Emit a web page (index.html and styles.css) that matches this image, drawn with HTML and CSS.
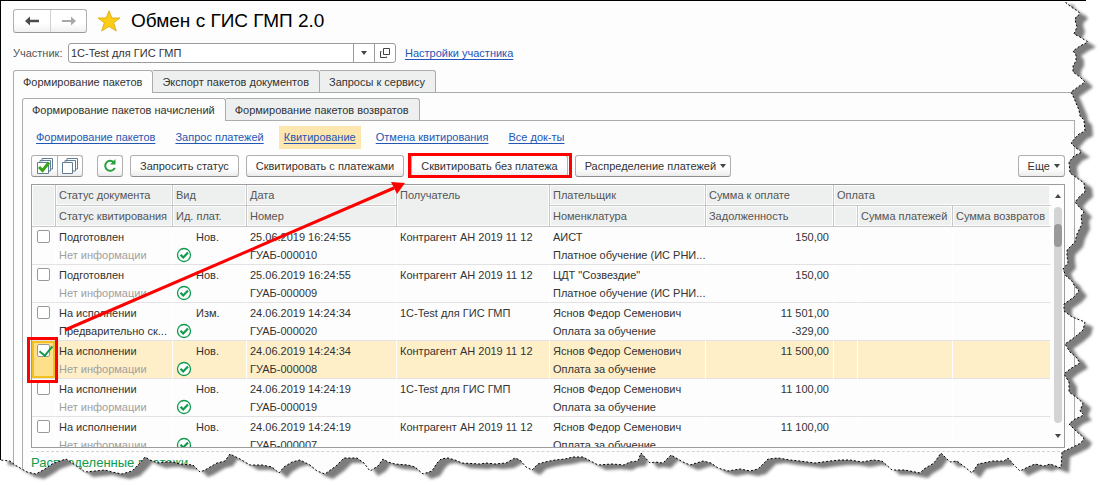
FILE: index.html
```
<!DOCTYPE html>
<html lang="ru">
<head>
<meta charset="utf-8">
<title>Обмен с ГИС ГМП 2.0</title>
<link rel="stylesheet" href="styles.css">
</head>
<body>
<svg class="defs" aria-hidden="true">
  <symbol id="ok" viewBox="0 0 16 16"><circle cx="8" cy="8" r="6.5" fill="#fff" stroke="#0d9b4c" stroke-width="1.3"/><path d="M4.5 7.8 7.2 10.5 12 5.6" fill="none" stroke="#0d9b4c" stroke-width="2.2"/></symbol>
</svg>
<main class="window">
  <header class="title-bar">
    <div class="history">
      <button type="button" aria-label="Назад"><svg width="16" height="12" viewBox="0 0 16 12"><path d="M1 6 6 1.5V4.8H15V7.2H6V10.5Z" fill="#4a4a4a"/></svg></button>
      <button type="button" aria-label="Вперед"><svg width="16" height="12" viewBox="0 0 16 12"><path d="M15 6 10 1.5V5H1V7H10V10.5Z" fill="#a8a8a8"/></svg></button>
    </div>
    <svg class="star" width="24" height="22" viewBox="0 0 24 22"><path d="M12 .8 14.8 8H23L16.6 12.8 19.3 21 12 16.4 4.7 21 7.4 12.8 1 8H9.2Z" fill="#fbcd17" stroke="#e0b01e"/></svg>
    <h1>Обмен с ГИС ГМП 2.0</h1>
  </header>

  <div class="member">
    <label for="member">Участник:</label>
    <div class="combo">
      <input id="member" type="text" value="1С-Test для ГИС ГМП">
      <button type="button" aria-label="Выбрать"><i class="caret"></i></button>
      <button type="button" aria-label="Открыть"><svg width="10" height="10" viewBox="0 0 10 10"><path d="M3.5.5H9.5V6.5H3.5ZM1.5 3.5H.5V9.5H6.5V8.5" fill="none" stroke="#444"/></svg></button>
    </div>
    <a href="#">Настройки участника</a>
  </div>

  <div class="tabs">
    <button type="button" class="tab active">Формирование пакетов</button>
    <button type="button" class="tab">Экспорт пакетов документов</button>
    <button type="button" class="tab">Запросы к сервису</button>
  </div>
  <section class="outer-panel">
    <div class="tabs">
      <button type="button" class="tab active">Формирование пакетов начислений</button>
      <button type="button" class="tab">Формирование пакетов возвратов</button>
    </div>
    <div class="inner-panel">
      <nav class="links">
        <a href="#">Формирование пакетов</a>
        <a href="#">Запрос платежей</a>
        <a href="#" class="current">Квитирование</a>
        <a href="#">Отмена квитирования</a>
        <a href="#">Все док-ты</a>
      </nav>
      <div class="toolbar">
        <div class="pair">
          <button type="button" aria-label="Отметить все"><svg width="16" height="16" viewBox="0 0 16 16"><path d="M5 3.5V.5H15.5V11H13M3 5.500V2.500H13.500V13H11" fill="none" stroke="#607d94"/><path d="M.5 4.500H11.500V15.500H.5Z" fill="#fff" stroke="#607d94"/><path d="M2 9 5.500 12.500 12 4.500" fill="none" stroke="#36a51c" stroke-width="3"/></svg></button>
          <button type="button" aria-label="Снять отметки"><svg width="16" height="16" viewBox="0 0 16 16"><path d="M5 3.500V.5H15.500V11H13M3 4.500V2.500H13.500V13H11" fill="none" stroke="#607d94"/><path d="M.5 4.500H10.500V15.500H.5Z" fill="#fff" stroke="#607d94"/></svg></button>
        </div>
        <button type="button" class="btn icon" aria-label="Обновить"><svg width="14" height="14" viewBox="0 0 14 14"><path d="M11.200 3.800A5 5 0 1 0 11.800 8.800" fill="none" stroke="#27a03c" stroke-width="2"/><path d="M12.500 0V5.500H7Z" fill="#27a03c"/></svg></button>
        <button type="button" class="btn">Запросить статус</button>
        <button type="button" class="btn">Сквитировать с платежами</button>
        <button type="button" class="btn">Сквитировать без платежа</button>
        <button type="button" class="btn menu">Распределение платежей<i class="caret"></i></button>
        <button type="button" class="btn menu more">Еще<i class="caret"></i></button>
      </div>

      <div class="list">
        <div class="rows">
        <table>
          <colgroup><col class="c-check"><col class="c-status"><col class="c-kind"><col class="c-date"><col class="c-payee"><col class="c-payer"><col class="c-sum"><col class="c-mark"><col class="c-paid"><col class="c-back"></colgroup>
          <thead>
            <tr><th rowspan="2"></th><th>Статус документа</th><th>Вид</th><th>Дата</th><th rowspan="2">Получатель</th><th>Плательщик</th><th>Сумма к оплате</th><th colspan="3">Оплата</th></tr>
            <tr><th>Статус квитирования</th><th>Ид. плат.</th><th>Номер</th><th>Номенклатура</th><th>Задолженность</th><th></th><th>Сумма платежей</th><th>Сумма возвратов</th></tr>
          </thead>
          <tbody>
            <tr><td rowspan="2" class="pick"><input type="checkbox" aria-label="ГУАБ-000010"></td><td>Подготовлен</td><td class="kind">Нов.</td><td>25.06.2019 16:24:55</td><td>Контрагент АН 2019 11 12</td><td>АИСТ</td><td class="num">150,00</td><td></td><td></td><td></td></tr>
            <tr><td class="dim">Нет информации</td><td><svg class="ok"><use href="#ok"/></svg></td><td>ГУАБ-000010</td><td></td><td>Платное обучение (ИС РНИ...</td><td></td><td></td><td></td><td></td></tr>
          </tbody>
          <tbody>
            <tr><td rowspan="2" class="pick"><input type="checkbox" aria-label="ГУАБ-000009"></td><td>Подготовлен</td><td class="kind">Нов.</td><td>25.06.2019 16:24:55</td><td>Контрагент АН 2019 11 12</td><td>ЦДТ "Созвездие"</td><td class="num">150,00</td><td></td><td></td><td></td></tr>
            <tr><td class="dim">Нет информации</td><td><svg class="ok"><use href="#ok"/></svg></td><td>ГУАБ-000009</td><td></td><td>Платное обучение (ИС РНИ...</td><td></td><td></td><td></td><td></td></tr>
          </tbody>
          <tbody>
            <tr><td rowspan="2" class="pick"><input type="checkbox" aria-label="ГУАБ-000020"></td><td>На исполнении</td><td class="kind">Изм.</td><td>24.06.2019 14:24:34</td><td>1С-Test для ГИС ГМП</td><td>Яснов Федор Семенович</td><td class="num">11 501,00</td><td></td><td></td><td></td></tr>
            <tr><td>Предварительно ск...</td><td><svg class="ok"><use href="#ok"/></svg></td><td>ГУАБ-000020</td><td></td><td>Оплата за обучение</td><td class="num">-329,00</td><td></td><td></td><td></td></tr>
          </tbody>
          <tbody class="selected">
            <tr><td rowspan="2" class="pick"><input type="checkbox" checked aria-label="ГУАБ-000008"></td><td>На исполнении</td><td class="kind">Нов.</td><td>24.06.2019 14:24:34</td><td>Контрагент АН 2019 11 12</td><td>Яснов Федор Семенович</td><td class="num">11 500,00</td><td></td><td></td><td></td></tr>
            <tr><td class="dim">Нет информации</td><td><svg class="ok"><use href="#ok"/></svg></td><td>ГУАБ-000008</td><td></td><td>Оплата за обучение</td><td></td><td></td><td></td><td></td></tr>
          </tbody>
          <tbody>
            <tr><td rowspan="2" class="pick"><input type="checkbox" aria-label="ГУАБ-000019"></td><td>На исполнении</td><td class="kind">Нов.</td><td>24.06.2019 14:24:19</td><td>1С-Test для ГИС ГМП</td><td>Яснов Федор Семенович</td><td class="num">11 100,00</td><td></td><td></td><td></td></tr>
            <tr><td class="dim">Нет информации</td><td><svg class="ok"><use href="#ok"/></svg></td><td>ГУАБ-000019</td><td></td><td>Оплата за обучение</td><td></td><td></td><td></td><td></td></tr>
          </tbody>
          <tbody>
            <tr><td rowspan="2" class="pick"><input type="checkbox" aria-label="ГУАБ-000007"></td><td>На исполнении</td><td class="kind">Нов.</td><td>24.06.2019 14:24:19</td><td>Контрагент АН 2019 11 12</td><td>Яснов Федор Семенович</td><td class="num">11 100,00</td><td></td><td></td><td></td></tr>
            <tr><td class="dim">Нет информации</td><td><svg class="ok"><use href="#ok"/></svg></td><td>ГУАБ-000007</td><td></td><td>Оплата за обучение</td><td></td><td></td><td></td><td></td></tr>
          </tbody>
        </table>
        </div>
        <div class="scrollbar"><i class="caret up"></i><div class="track"><div class="thumb"></div></div><i class="caret"></i></div>
      </div>
      <h2>Распределенные платежи</h2>
    </div>
  </section>
</main>

<svg class="overlay" viewBox="0 0 1100 485" preserveAspectRatio="none" aria-hidden="true">
  <defs>
    <path id="sheet" d="M0 0H1066V3L1070 6 1074 9 1078 11 1080 14 1076 17 1075 20 1077 27 1074 34 1080 37 1088 42 1080 46 1073 51 1076 55 1076 61 1073 66 1073 72 1080 77 1085 82 1078 87 1071 92 1074 98 1076 103 1079 110 1080 116 1084 120 1085 131 1079 134 1076 137 1071 143 1076 148 1082 152 1074 156 1069 162 1070 173 1077 178 1084 183 1085 192 1080 196 1075 202 1080 208 1084 212 1081 216 1082 224 1077 234 1075 242 1067 250 1067 256 1068 263 1063 269 1066 276 1072 281 1074 285 1079 291 1074 297 1064 304 1064 311 1072 317 1085 322 1083 330 1075 337 1065 344 1070 352 1076 357 1080 363 1070 369 1064 374 1069 382 1069 392 1076 397 1083 403 1080 411 1084 415 1075 419 1069 424 1076 431 1084 438 1081 443 1071 448 1062 452 1061 468 1050 464 1044 466 1035 464 1028 467 1020 471 1014 465 1008 458 1004 461 993 461 978 464 972 473 966 468 957 461 950 462 941 453 934 463 924 469 920 473 905 470 892 470 882 461 873 460 862 462 850 460 840 460 830 461 815 463 800 461 790 460 778 458 768 459 758 469 750 471 740 469 728 471 718 468 711 463 703 461 690 465 683 462 671 455 663 463 655 462 650 463 641 453 638 461 630 462 624 465 612 464 598 465 583 457 573 457 565 459 555 460 545 462 538 464 532 470 526 467 520 460 515 458 506 463 495 464 486 463 480 464 462 463 455 460 448 458 441 459 437 463 432 471 423 474 415 467 408 465 395 464 388 462 383 459 378 466 370 471 364 463 357 458 344 458 336 466 325 474 317 471 310 465 300 460 292 462 284 467 279 473 272 467 262 465 250 465 240 459 230 454 225 461 217 463 205 470 200 472 193 465 180 464 172 462 165 462 158 463 150 460 145 457 140 463 132 471 122 474 112 472 105 470 95 471 85 472 78 467 72 463 66 459 60 461 52 464 45 469 36 474 27 472 15 465 10 461 0 460Z"/>
    <clipPath id="outside"><path clip-rule="evenodd" d="M0 0H1100V485H0ZM0 0H1066V3L1070 6 1074 9 1078 11 1080 14 1076 17 1075 20 1077 27 1074 34 1080 37 1088 42 1080 46 1073 51 1076 55 1076 61 1073 66 1073 72 1080 77 1085 82 1078 87 1071 92 1074 98 1076 103 1079 110 1080 116 1084 120 1085 131 1079 134 1076 137 1071 143 1076 148 1082 152 1074 156 1069 162 1070 173 1077 178 1084 183 1085 192 1080 196 1075 202 1080 208 1084 212 1081 216 1082 224 1077 234 1075 242 1067 250 1067 256 1068 263 1063 269 1066 276 1072 281 1074 285 1079 291 1074 297 1064 304 1064 311 1072 317 1085 322 1083 330 1075 337 1065 344 1070 352 1076 357 1080 363 1070 369 1064 374 1069 382 1069 392 1076 397 1083 403 1080 411 1084 415 1075 419 1069 424 1076 431 1084 438 1081 443 1071 448 1062 452 1061 468 1050 464 1044 466 1035 464 1028 467 1020 471 1014 465 1008 458 1004 461 993 461 978 464 972 473 966 468 957 461 950 462 941 453 934 463 924 469 920 473 905 470 892 470 882 461 873 460 862 462 850 460 840 460 830 461 815 463 800 461 790 460 778 458 768 459 758 469 750 471 740 469 728 471 718 468 711 463 703 461 690 465 683 462 671 455 663 463 655 462 650 463 641 453 638 461 630 462 624 465 612 464 598 465 583 457 573 457 565 459 555 460 545 462 538 464 532 470 526 467 520 460 515 458 506 463 495 464 486 463 480 464 462 463 455 460 448 458 441 459 437 463 432 471 423 474 415 467 408 465 395 464 388 462 383 459 378 466 370 471 364 463 357 458 344 458 336 466 325 474 317 471 310 465 300 460 292 462 284 467 279 473 272 467 262 465 250 465 240 459 230 454 225 461 217 463 205 470 200 472 193 465 180 464 172 462 165 462 158 463 150 460 145 457 140 463 132 471 122 474 112 472 105 470 95 471 85 472 78 467 72 463 66 459 60 461 52 464 45 469 36 474 27 472 15 465 10 461 0 460Z"/></clipPath>
    <filter id="soft" x="-5%" y="-5%" width="110%" height="110%"><feGaussianBlur stdDeviation="1.6"/></filter>
  </defs>
  <g clip-path="url(#outside)">
    <path d="M0 0H1100V485H0Z" fill="#fff"/>
    <g filter="url(#soft)"><use href="#sheet" x="8" y="5" fill="#7d7d7d"/></g>
  </g>
  <use href="#sheet" fill="none" stroke="#000" stroke-dasharray="2 2"/>
  <path d="M0 .5H1086M.5 0V460" fill="none" stroke="#000"/>
  <g fill="none" stroke="#f00" stroke-width="3">
    <path d="M28.500 338.500H56.500V381.500H28.500ZM409.500 154.500H570.500V176.500H409.500Z"/>
    <path d="M65 330 394 188"/>
  </g>
  <path d="M405 183 391 182 397 194Z" fill="#f00"/>
</svg>
</body>
</html>
```
FILE: styles.css
```
* { box-sizing: border-box; }
body {
  margin: 0;
  position: relative;
  min-height: 100vh;
  overflow: hidden;
  background: #fff;
  color: #333;
  font: 11px/18px "Liberation Sans", Arial, sans-serif;
}
button, input { font: inherit; color: inherit; margin: 0; }
button { padding: 0; }
a { color: #2456b4; text-decoration: underline; text-underline-offset: 2px; }
.defs { position: absolute; width: 0; height: 0; }
.window { background: #fdfdfd; padding: 8px 0 0 13px; }

.title-bar { display: flex; align-items: center; height: 25px; }
.history {
  display: flex;
  border: 1px solid #b0b0b0;
  border-bottom-color: #999;
  border-radius: 3px;
  background: linear-gradient(#fff 60%, #f0f0f0);
}
.history button {
  display: grid;
  place-items: center;
  width: 36px;
  height: 22px;
  border: 0;
  background: none;
}
.history button + button { border-left: 1px solid #d0d0d0; }
.star { margin: 0 10px; }
h1 { margin: 0; font-size: 19px; line-height: 24px; font-weight: 400; color: #000; }

.member { display: flex; align-items: center; margin-top: 10px; }
.member label { width: 55px; color: #555; white-space: nowrap; }
.combo {
  display: flex;
  width: 328px;
  height: 20px;
  margin-right: 9px;
  border: 1px solid #9c9c9c;
  border-radius: 3px;
  background: #fff;
}
.combo input { flex: 1; min-width: 0; padding: 0 2px; border: 0; background: none; outline: 0; }
.combo button {
  display: grid;
  place-items: center;
  width: 21px;
  border: 0;
  border-left: 1px solid #9c9c9c;
  background: none;
}
.caret { width: 0; height: 0; border: 3px solid transparent; border-top: 4px solid #444; border-bottom: 0; }
.caret.up { border-top: 0; border-bottom: 4px solid #444; }

.tabs { display: flex; }
.member + .tabs { margin-top: 7px; }
.tab {
  height: 22px;
  padding: 0 10px 0 9px;
  border: 1px solid #acacac;
  border-bottom: 0;
  border-left-width: 0;
  border-radius: 0 3px 0 0;
  background: #eef0f0;
  white-space: nowrap;
}
.tab:first-child { border-left-width: 1px; border-radius: 3px 3px 0 0; }
.tab.active { height: 23px; margin-bottom: -1px; background: #fdfdfd; position: relative; }
.outer-panel { border: solid #acacac; border-width: 1px 0 0 1px; padding: 5px 0 0 8px; }
.inner-panel { margin-right: 25px; border: solid #acacac; border-width: 1px 1px 0; padding: 5px 9px 4px 8px; }

.links { display: flex; gap: 10px; }
.links a { padding: 2px 5px; white-space: nowrap; line-height: 19px; }
.links .current { background: #fde7ae; }

.toolbar { display: flex; gap: 7px; margin: 6px 0 7px; }
.btn, .pair {
  height: 22px;
  border: 1px solid #b0b0b0;
  border-bottom-color: #8e8e8e;
  border-radius: 3px;
  background: linear-gradient(#fff 60%, #ececec);
}
.btn { padding: 0 9px; white-space: nowrap; }
.pair { display: flex; margin-right: 7px; }
.pair button { display: grid; place-items: center; width: 25px; border: 0; background: none; }
.pair button + button { border-left: 1px solid #b0b0b0; }
.icon { display: grid; place-items: center; width: 26px; padding: 0; }
.menu { display: flex; align-items: center; gap: 4px; padding-right: 4px; }
.more { margin-left: auto; }

.list { display: flex; height: 264px; border: 1px solid #9c9c9c; background: #fdfdfd; overflow: hidden; }
.rows { flex: 1; min-width: 0; overflow: hidden; }
table { width: 100%; table-layout: fixed; border-collapse: separate; border-spacing: 0; }
.c-check { width: 24px; }
.c-status { width: 117px; }
.c-kind { width: 74px; }
.c-date { width: 150px; }
.c-payee { width: 153px; }
.c-sum { width: 128px; }
.c-mark { width: 24px; }
.c-paid { width: 95px; }
.c-back { width: 98px; }
th, td { padding: 0 0 0 3px; text-align: left; font-weight: 400; white-space: nowrap; overflow: hidden; }
th {
  height: 21px;
  border: solid #c8c8c8;
  border-width: 0 1px 1px 0;
  background: #eef0f0;
  color: #555;
  vertical-align: top;
  box-shadow: inset 0 0 0 1px #fdfdfd;
  line-height: 20px;
}
th:last-child { border-right-color: #fdfdfd; }
td { height: 19px; line-height: 18px; border-right: 1px solid #fff; }
tbody tr:last-child td, .pick { border-bottom: 1px solid #e2e2e2; }
.dim { color: #a0a0a0; }
.kind { padding-left: 23px; }
td.num { padding-right: 4px; text-align: right; }
.ok { display: block; width: 16px; height: 16px; }
.pick { padding-left: 5px; vertical-align: top; }
.pick input {
  appearance: none;
  display: block;
  width: 13px;
  height: 13px;
  margin-top: 3px;
  border: 1px solid #999;
  border-radius: 2px;
  background: #fff;
}
.pick input:checked::after {
  content: "";
  display: block;
  width: 6px;
  height: 11px;
  margin: -2px 0 0 4px;
  border: solid #0d9b4c;
  border-width: 0 2px 2px 0;
  transform: rotate(40deg);
}
.selected td { background: #feefc8; }
.selected .pick { background: #fee08b; box-shadow: inset 0 0 0 2px #f4c01e; }
.scrollbar { display: flex; flex-direction: column; align-items: center; width: 13px; padding: 9px 0; }
.track { flex: 1; width: 8px; margin: 9px 0 11px; border-radius: 4px; background: #d4d4d4; padding-top: 17px; }
.thumb { height: 23px; border-radius: 4px; background: #999; }
h2 {
  margin: 3px 0 0;
  border-top: 1px dashed #d4d4d4;
  color: #0d9b4c;
  font-size: 13px;
  line-height: 22px;
  font-weight: 400;
}
.overlay { position: absolute; inset: 0; width: 100%; height: 100%; pointer-events: none; }
```
